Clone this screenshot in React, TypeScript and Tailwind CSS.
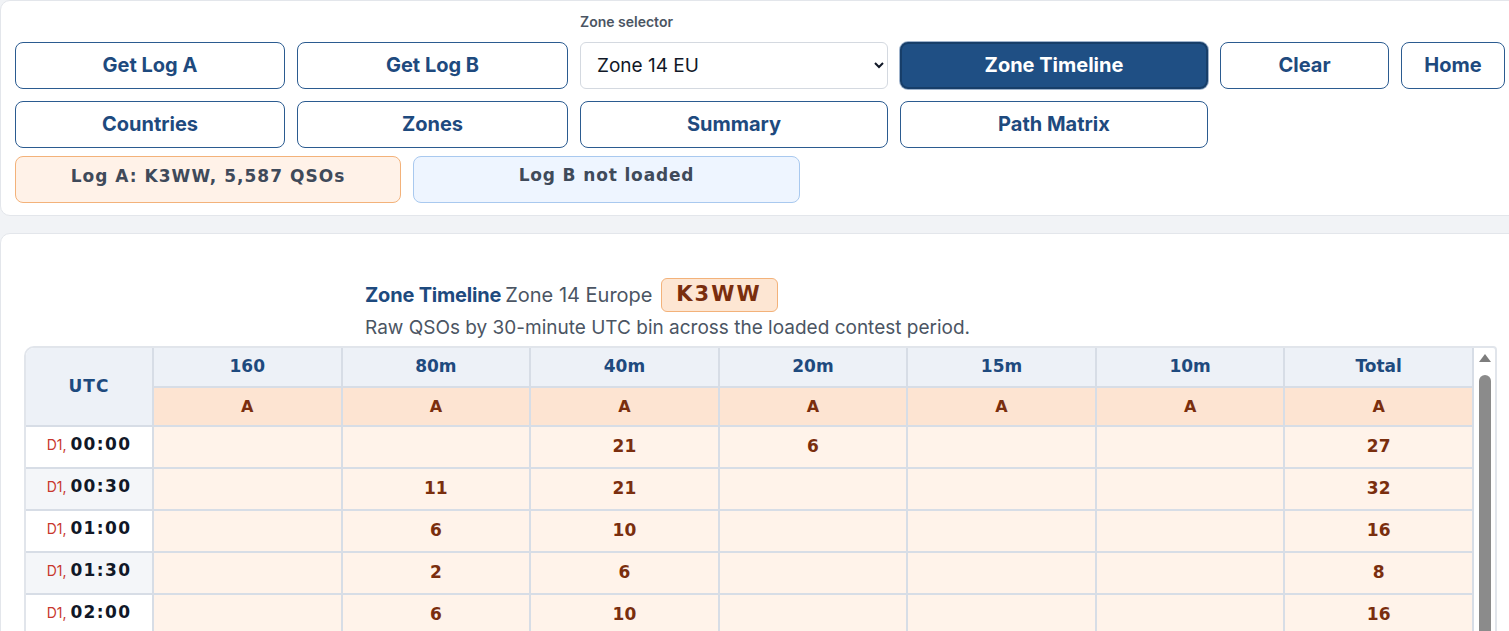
import React from "react";

const wide = { fontFamily: '"DejaVu Sans", Verdana, sans-serif' };
const inter = { fontFamily: "Inter, Roboto, sans-serif" };

type Row = { d: string; t: string; v: (number | null)[] };

const rows: Row[] = [
  { d: "D1,", t: "00:00", v: [null, null, 21, 6, null, null, 27] },
  { d: "D1,", t: "00:30", v: [null, 11, 21, null, null, null, 32] },
  { d: "D1,", t: "01:00", v: [null, 6, 10, null, null, null, 16] },
  { d: "D1,", t: "01:30", v: [null, 2, 6, null, null, null, 8] },
  { d: "D1,", t: "02:00", v: [null, 6, 10, null, null, null, 16] },
  { d: "D1,", t: "02:30", v: [null, 4, 9, null, null, null, 13] },
  { d: "D1,", t: "03:00", v: [1, 5, 7, null, null, null, 13] },
  { d: "D1,", t: "03:30", v: [null, 3, 8, null, null, null, 11] },
  { d: "D1,", t: "04:00", v: [null, 7, 5, null, null, null, 12] },
  { d: "D1,", t: "04:30", v: [2, 4, 6, null, null, null, 12] },
  { d: "D1,", t: "05:00", v: [null, 3, 4, null, null, null, 7] },
  { d: "D1,", t: "05:30", v: [1, 2, 3, null, null, null, 6] },
];

const bands = ["160", "80m", "40m", "20m", "15m", "10m", "Total"];

function OutlineBtn({ children }: { children: React.ReactNode }) {
  return (
    <button className="h-[47px] w-full rounded-lg border border-[#2b5b90] bg-white pb-[1px] text-[20px] font-bold text-[#1e4a7e]">
      {children}
    </button>
  );
}

export default function App() {
  return (
    <div className="min-h-screen w-full overflow-hidden bg-[#f1f3f6]" style={inter}>
      {/* Top control card */}
      <div className="w-[1530px] rounded-[10px] border border-[#e3e6eb] bg-white px-[14px] pt-[11px] pb-[12px]">
        <div className="grid grid-cols-[270px_271px_308px_308px_169px_104px] gap-x-3">
          <div />
          <div />
          <div className="mb-[10px] text-[14px] font-semibold leading-5 text-[#4b5563]">Zone selector</div>
          <div />
          <div />
          <div />
          <OutlineBtn>Get Log A</OutlineBtn>
          <OutlineBtn>Get Log B</OutlineBtn>
          <select
            defaultValue="z14"
            className="h-[47px] w-full rounded-md border border-[#d4d9e0] bg-white pl-3 pr-3 pb-[1px] text-[19px] text-[#111827]"
          >
            <option value="z14">Zone 14 EU</option>
          </select>
          <button className="h-[47px] w-full rounded-lg border-2 border-[#173e69] bg-[#1f4f84] pb-[1px] text-[20px] font-bold text-white shadow-[0_0_0_1px_#9fb3cc]">
            Zone Timeline
          </button>
          <OutlineBtn>Clear</OutlineBtn>
          <OutlineBtn>Home</OutlineBtn>
        </div>
        <div className="mt-3 grid grid-cols-[270px_271px_308px_308px] gap-x-3">
          <OutlineBtn>Countries</OutlineBtn>
          <OutlineBtn>Zones</OutlineBtn>
          <OutlineBtn>Summary</OutlineBtn>
          <OutlineBtn>Path Matrix</OutlineBtn>
        </div>
        <div className="mt-2 flex gap-3">
          <div
            className="flex h-[47px] w-[386px] items-center justify-center rounded-lg border border-[#f3b27a] bg-[#fff2e8] pb-[6px] text-[17px] font-bold tracking-[0.06em] text-[#3f4a5a]"
            style={wide}
          >
            Log A: K3WW, 5,587 QSOs
          </div>
          <div
            className="flex h-[47px] w-[387px] items-center justify-center rounded-lg border border-[#a9c9ef] bg-[#eef5ff] pb-[8px] text-[17px] font-bold tracking-[0.05em] text-[#3f4a5a]"
            style={wide}
          >
            Log B not loaded
          </div>
        </div>
      </div>

      {/* Timeline card */}
      <div className="mt-[17px] w-[1530px] rounded-[10px] border border-[#e3e6eb] bg-white pl-[23px] pt-[42px] pb-6">
        <div className="ml-[341px]">
          <div className="flex items-center pt-[2px] text-[20px]">
            <span className="font-bold tracking-[-0.01em] text-[#1e4a7e]">Zone Timeline</span>
            <span className="ml-[4px] text-[#4b5563]">Zone 14 Europe</span>
            <span
              className="ml-[8px] flex h-[34px] w-[117px] items-center justify-center rounded-md border border-[#f3b27a] bg-[#fde6d3] text-[21px] font-bold tracking-[0.1em] text-[#7a2e0e]"
              style={wide}
            >
              K3WW
            </span>
          </div>
          <div className="mt-[2px] text-[19px] leading-[28px] text-[#4b5563]">
            Raw QSOs by 30-minute UTC bin across the loaded contest period.
          </div>
        </div>

        <div className="mt-[4px] flex h-[600px] w-[1473px] overflow-hidden rounded-tl-[10px] rounded-tr-[4px] border-2 border-[#e1e5eb] bg-white">
          <table className="h-fit w-[1448px] shrink-0 table-fixed border-collapse" style={wide}>
            <colgroup>
              <col className="w-[127px]" />
              {bands.map((b) => (
                <col key={b} />
              ))}
            </colgroup>
            <thead>
              <tr className="h-[39px]">
                <th
                  rowSpan={2}
                  className="border-r-2 border-b-2 border-[#d7dde6] bg-[#edf1f7] text-[17px] font-bold tracking-[0.06em] text-[#1e4a7e]"
                >
                  UTC
                </th>
                {bands.map((b) => (
                  <th
                    key={b}
                    className="border-r-2 border-b-2 border-[#d7dde6] bg-[#edf1f7] text-[17px] font-bold text-[#1e4a7e]"
                  >
                    {b}
                  </th>
                ))}
              </tr>
              <tr className="h-[39px]">
                {bands.map((b) => (
                  <th
                    key={b}
                    className="border-r-2 border-b-2 border-[#d7dde6] bg-[#fde4d2] text-[16px] font-bold text-[#7a2e0e]"
                  >
                    A
                  </th>
                ))}
              </tr>
            </thead>
            <tbody>
              {rows.map((r, i) => (
                <tr key={r.t} className="h-[42px]">
                  <td
                    className={`whitespace-nowrap border-r-2 border-b-2 border-[#d7dde6] pb-[5px] text-center ${
                      i % 2 === 0 ? "bg-white" : "bg-[#f4f6f9]"
                    }`}
                  >
                    <span className="text-[14px] text-[#c8372d]" style={inter}>
                      {r.d}{" "}
                    </span>
                    <span className="text-[17px] font-bold tracking-[0.08em] text-[#111827]">{r.t}</span>
                  </td>
                  {r.v.map((v, j) => (
                    <td
                      key={j}
                      className="border-r-2 border-b-2 border-[#d7dde6] bg-[#fff3ea] text-center text-[17px] font-bold text-[#7a2e0e]"
                    >
                      {v ?? ""}
                    </td>
                  ))}
                </tr>
              ))}
            </tbody>
          </table>
          {/* scrollbar */}
          <div className="ml-[3px] flex w-[15px] shrink-0 flex-col items-center pt-[6px]">
            <svg width="12" height="8" viewBox="0 0 12 8">
              <path d="M6 0 L12 8 L0 8 Z" fill="#7d7d7d" />
            </svg>
            <div className="mt-[13px] h-[420px] w-[12px] rounded-full bg-[#8b8b8b]" />
          </div>
        </div>
      </div>
    </div>
  );
}
